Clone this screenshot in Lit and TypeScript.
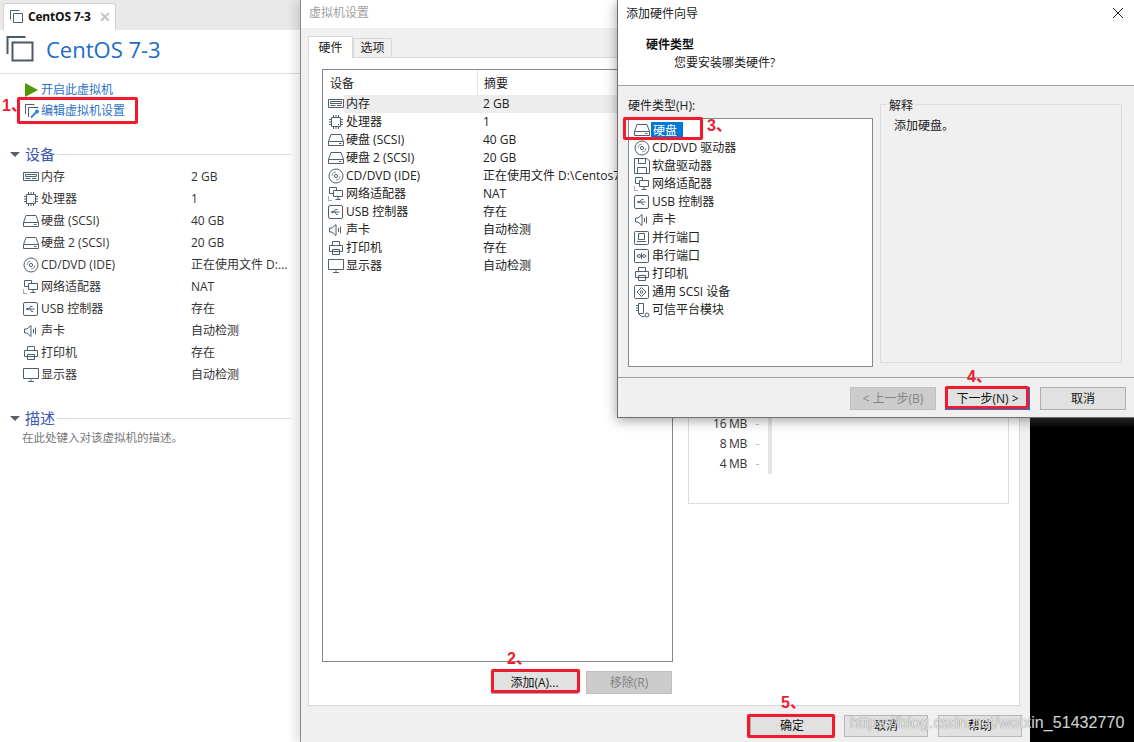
import { LitElement, html, css, svg } from "lit";
import { customElement } from "lit/decorators.js";

const ICONS: Record<string, unknown> = {
  vm: svg`<path d="M1.5 10.5v-9h9M4.5 13.5v-9h9v9z" fill="none"/>`,
  mem: svg`<path d="M.5 3.5h15v8H.5zM2.5 5.5h11v2h-11zM2.500 9.500h5M9 9.500h4.500" fill="none"/>`,
  cpu: svg`<path d="M3.5 3.5h9v9h-9zM5.5 1v2M8 1v2M10.5 1v2M5.5 13v2M8 13v2M10.5 13v2M1 5.5h2M1 8h2M1 10.5h2M13 5.5h2M13 8h2M13 10.5h2M10 10.5h1" fill="none"/>`,
  hdd: svg`<path d="M.5 9.5 3 2.5h10l2.5 7v4H.5zM.5 9.5h15M11 11.5h2.500" fill="none"/>`,
  cd: svg`<circle cx="8" cy="8" r="7" fill="none"/><circle cx="8" cy="8" r="1.6" fill="none"/><path d="M4 8a4 4 0 0 1 4-4M12 8a4 4 0 0 1-4 4" fill="none" opacity=".6"/>`,
  net: svg`<path d="M1.5 1.5h7v3M1.5 1.5v6h4M5.5 4.5h9v6h-9zM10 10.500v3M7.500 13.500h5" fill="none"/><path d="M.5 10.500v4h4" fill="none" stroke-dasharray="1 1"/>`,
  usb: svg`<rect x=".5" y="1.5" width="14" height="13" rx="1.5" fill="none"/><path d="M3.500 8h8M5.500 8l2-2.500h2M7 8l1.500 2.500H10M3.500 8 5 7v2z" fill="none"/>`,
  snd: svg`<path d="M1.5 6v4H4l4 3.500v-11L4 6zM10.500 6v4M12.500 4.500v7" fill="none"/>`,
  prn: svg`<path d="M4.5 5.5v-4h7v4M1.500 5.5h13v6h-13zM4.5 9.5h7v5h-7z" fill="none"/>`,
  mon: svg`<path d="M.5 1.5h15v10H.5zM5 14.500h6" fill="none"/><path d="M7 12h2v2H7z" fill="#b8bec4" stroke="none"/>`,
  flop: svg`<path d="M.5.5H13L15.500 3v12.500H.5zM4.500.5v5h7v-5M3.500 15.500v-6h9v6" fill="none"/>`,
  par: svg`<rect x=".5" y="1.5" width="14" height="13" rx="1" fill="none"/><path d="M4.500 3.500h6v6h-6zM3 11.500h9" fill="none"/>`,
  ser: svg`<rect x=".5" y="1.5" width="14" height="13" rx="1" fill="none"/><circle cx="5" cy="8" r="1.500" fill="none"/><circle cx="10" cy="8" r="1.500" fill="none"/><path d="M2.500 8h1M6.500 8h2M11.500 8h1M7.500 5v6" fill="none"/>`,
  scsi: svg`<rect x=".5" y="1.5" width="14" height="13" rx="1" fill="none"/><path d="M7.500 3.500 12 8l-4.500 4.500L3 8z" fill="none"/><circle cx="7.500" cy="8" r="1.300" fill="none"/>`,
  tpm: svg`<path d="M4.500 1.500h5v10h-5zM2 3.500h2M2 6h2M2 8.500h2M4.500 11.500l3 3h3" fill="none"/><circle cx="13" cy="13" r="2" fill="none"/>`,
};

const icon = (n: string) =>
  html`<svg class="ic" viewBox="0 0 16 16" width="16" height="16">${ICONS[n]}</svg>`;

const LEFT: [string, string, string][] = [
  ["mem", "内存", "2 GB"],
  ["cpu", "处理器", "1"],
  ["hdd", "硬盘 (SCSI)", "40 GB"],
  ["hdd", "硬盘 2 (SCSI)", "20 GB"],
  ["cd", "CD/DVD (IDE)", "正在使用文件 D:..."],
  ["net", "网络适配器", "NAT"],
  ["usb", "USB 控制器", "存在"],
  ["snd", "声卡", "自动检测"],
  ["prn", "打印机", "存在"],
  ["mon", "显示器", "自动检测"],
];

const SETTINGS: [string, string, string][] = LEFT.map((r) =>
  r[0] === "cd" ? [r[0], r[1], "正在使用文件 D:\\Centos7\\CentOS-7-x86_64-DVD.iso"] : r
) as [string, string, string][];

const HW: [string, string][] = [
  ["hdd", "硬盘"],
  ["cd", "CD/DVD 驱动器"],
  ["flop", "软盘驱动器"],
  ["net", "网络适配器"],
  ["usb", "USB 控制器"],
  ["snd", "声卡"],
  ["par", "并行端口"],
  ["ser", "串行端口"],
  ["prn", "打印机"],
  ["scsi", "通用 SCSI 设备"],
  ["tpm", "可信平台模块"],
];

@customElement("app-root")
export class AppRoot extends LitElement {
  static styles = css`
    :host {
      display: block;
      width: 1134px;
      height: 742px;
      font: 12px/16px "Open Sans", "Noto Sans CJK SC", sans-serif;
      color: #222;
    }
    * { box-sizing: border-box; }
    .desk { position: relative; width: 1134px; height: 742px; overflow: hidden; background: linear-gradient(#2c2c2c, #000) 0 418px / 100% 10px no-repeat #000; }
    .ic { flex: none; display: block; stroke: #4f5f6c; stroke-width: 1; }

    /* VM panel */
    .vm { position: absolute; left: 0; top: 0; width: 300px; height: 742px; background: #fff; display: flex; flex-direction: column; }
    .tabs { height: 30px; flex: none; background: #e9e9e9; padding: 3px 0 0 3px; }
    .tab { width: 113px; height: 27px; background: #fff; border: 1px solid #d2d2d2; border-bottom: 0; border-radius: 3px 3px 0 0; display: flex; align-items: center; padding-left: 5px; font-weight: 700; color: #111; letter-spacing: -.2px; }
    .tab .ic { margin-right: 3px; }
    .tab .x { margin-left: auto; margin-right: 4px; color: #c4c4c4; font-size: 14px; font-weight: 700; }
    .head { height: 44px; flex: none; border-bottom: 1px solid #dcdcdc; display: flex; align-items: center; padding: 0 0 5px 6px; gap: 10px; }
    .head .ic { stroke: #4a5a68; stroke-width: 1.1; }
    .head span { font-size: 22px; line-height: 30px; color: #1a6cc4; }
    .actions { padding: 5px 0 0 25px; height: 71px; flex: none; }
    .act { height: 21px; display: flex; align-items: center; color: #2a72c8; white-space: nowrap; }
    .play { width: 0; height: 0; flex: none; border-left: 13px solid #4e9a06; border-top: 7px solid transparent; border-bottom: 7px solid transparent; margin-right: 3px; }
    .sec { display: flex; align-items: center; height: 18px; padding-left: 10px; color: #3d58b0; font-size: 15px; }
    .sec .tri { width: 0; height: 0; border-left: 5px solid transparent; border-right: 5px solid transparent; border-top: 5px solid #55606a; margin-right: 5px; }
    .sec .line { flex: 1; height: 1px; background: #dcdcdc; margin: 0 9px 0 2px; }
    .rows { padding: 3px 0 0 23px; height: 246px; flex: none; }
    .row { display: grid; grid-template-columns: 18px 150px 1fr; height: 22px; align-items: center; color: #333; white-space: nowrap; }
    .desc { padding: 3px 0 0 22px; color: #777; font-size: 11.5px; }

    /* Settings dialog */
    .set { position: absolute; left: 300px; top: 0; width: 730px; height: 742px; background: #f0f0f0; border-left: 1px solid #8a8a8a; box-shadow: -6px 0 8px rgba(0, 0, 0, .1); display: flex; flex-direction: column; }
    .set-title { height: 28px; flex: none; background: #fff; padding: 5px 0 0 8px; color: #a0a0a0; }
    .set-tabs { height: 29px; flex: none; display: flex; align-items: flex-end; padding-left: 7px; }
    .st { width: 45px; height: 22px; background: #fff; border: 1px solid #d9d9d9; border-bottom: 0; display: flex; align-items: center; justify-content: center; position: relative; top: 1px; z-index: 1; }
    .st.off { width: 39px; height: 19px; background: #f0f0f0; top: 0; }
    .panel { margin-left: 7px; width: 712px; height: 649px; flex: none; background: #fff; border: 1px solid #d9d9d9; padding: 11px 13px 0; display: flex; gap: 15px; }
    .col { width: 351px; flex: none; display: flex; flex-direction: column; }
    .list { height: 593px; flex: none; border: 1px solid #828790; background: #fff; }
    .lh { display: grid; grid-template-columns: 155px 1fr; height: 25px; align-items: center; }
    .lh span { padding: 2px 0 0 6px; height: 100%; display: flex; align-items: center; }
    .lh span:first-child { padding-left: 7px; border-right: 1px solid #e5e5e5; }
    .lr { display: grid; grid-template-columns: 21px 139px 1fr; height: 18px; align-items: center; white-space: nowrap; overflow: hidden; }
    .lr .ic { margin-left: 5px; }
    .lr.sel .t, .lr.sel .v { background: #ededed; height: 18px; line-height: 18px; }
    .lr .t { padding-left: 2px; }
    .side { display: flex; justify-content: flex-end; gap: 8px; padding: 9px 1px 0 0; }
    .btn { height: 23px; background: #e1e1e1; border: 1px solid #adadad; display: flex; align-items: center; justify-content: center; width: 86px; white-space: nowrap; color: #111; }
    .btn.off { background: #ccc; border-color: #bfbfbf; color: #838383; }
    .btn.def { border: 2px solid #0078d7; }
    .add { width: 87px; }
    .mem { flex: none; width: 321px; height: 435px; border: 1px solid #dcdcdc; padding-bottom: 29px; display: flex; flex-direction: column; justify-content: flex-end; }
    .mr { height: 20px; display: flex; align-items: center; }
    .mr b { font-weight: 400; width: 58px; text-align: right; color: #333; letter-spacing: -.3px; }
    .mr i { width: 3px; height: 1px; background: #bbb; margin: 0 9px; }
    .mr u { width: 4px; height: 20px; background: #e3e6e3; }
    .foot { flex: 1; display: flex; justify-content: flex-end; align-items: flex-start; gap: 10px; padding: 9px 8px 0 0; }
    .foot .btn { width: 84px; height: 22px; }
    .foot .btn.mn { border-color: #b8b8b8; }

    /* Wizard */
    .wiz { position: absolute; left: 617px; top: 0; width: 517px; height: 418px; background: #f0f0f0; border-left: 1px solid #707070; border-bottom: 1px solid #707070; box-shadow: 0 2px 12px rgba(0, 0, 0, .4); display: flex; flex-direction: column; }
    .wh { height: 86px; flex: none; background: #fff; border-bottom: 1px solid #a0a0a0; position: relative; padding: 6px 0 0 8px; }
    .wh .ttl { display: block; }
    .wh .h1 { display: block; margin: 15px 0 0 20px; font-weight: 700; color: #111; }
    .wh .h2 { display: block; margin: 2px 0 0 48px; color: #222; }
    .close { position: absolute; left: 494px; top: 7px; }
    .wb { height: 292px; flex: none; display: flex; padding: 12px 0 0 10px; border-bottom: 1px solid #a0a0a0; }
    .wl { width: 245px; flex: none; }
    .wl label { display: block; height: 20px; line-height: 16px; }
    .hw { height: 249px; border: 1px solid #828790; background: #fff; padding-top: 2px; }
    .hr { height: 18px; display: flex; align-items: center; padding-left: 5px; white-space: nowrap; gap: 1px; }
    .hr span { padding: 0 1px; }
    .hr.sel span { background: #0078d7; color: #fff; padding: 0 6px 0 2px; line-height: 17px; }
    .grp { position: relative; width: 242px; height: 259px; margin: 6px 0 0 7px; border: 1px solid #dcdcdc; padding: 13px 0 0 13px; }
    .grp .lg { position: absolute; left: 6px; top: -7px; background: #f0f0f0; padding: 0 2px; }
    .wf { flex: 1; display: flex; justify-content: flex-end; gap: 9px; padding: 9px 8px 0 0; }
    .wf .btn { height: 23px; }
    .wf .btn.def { width: 85px; margin-right: 1px; }

    /* Annotations */
    .box { position: absolute; border: 3px solid #ee1c2e; border-radius: 2px; box-shadow: 0 0 1px #f7838c; pointer-events: none; }
    .b1 { left: 17px; top: 97px; width: 121px; height: 27px; }
    .b2 { left: 491px; top: 669px; width: 89px; height: 24px; }
    .b3 { left: 623px; top: 117px; width: 80px; height: 23px; }
    .b4 { left: 945px; top: 386px; width: 84px; height: 23px; }
    .b5 { left: 747px; top: 714px; width: 88px; height: 24px; }
    .num { position: absolute; color: #ee1c2e; font: 700 16px/18px "Liberation Sans", "Noto Sans CJK SC", sans-serif; white-space: nowrap; }
    .n1 { left: 2px; top: 97px; }
    .n2 { left: 507px; top: 650px; }
    .n3 { left: 707px; top: 117px; }
    .n4 { left: 967px; top: 368px; }
    .n5 { left: 781px; top: 694px; }
    .mark { position: absolute; left: 850px; top: 713px; font: 16px/20px "Liberation Sans", sans-serif; letter-spacing: .06px; color: rgba(255, 255, 255, .78); text-shadow: 0 0 1px rgba(70, 70, 70, .8); white-space: nowrap; }
  `;

  render() {
    return html`<div class="desk">
      <section class="vm">
        <div class="tabs"><div class="tab">${icon("vm")}CentOS 7-3<span class="x">✕</span></div></div>
        <div class="head">
          <svg class="ic" viewBox="0 0 30 30" width="30" height="30"><path d="M1.5 20V3h18M6.5 26.5v-18h20v18z" fill="none" stroke-width="2"/></svg>
          <span>CentOS 7-3</span>
        </div>
        <div class="actions">
          <div class="act"><i class="play"></i>开启此虚拟机</div>
          <div class="act">
            <svg class="ic" viewBox="0 0 16 16" width="16" height="16">
              <path d="M.5 11V1.5h9M3.5 14V4.500h10" fill="none"/>
              <path d="M6 14.500l5-5" fill="none" stroke="#2a86d0" stroke-width="2"/>
              <circle cx="12" cy="8.500" r="2" fill="#2a86d0" stroke="none"/>
            </svg>编辑虚拟机设置
          </div>
        </div>
        <div class="sec"><i class="tri"></i>设备<i class="line"></i></div>
        <div class="rows">
          ${LEFT.map((r) => html`<div class="row">${icon(r[0])}<span>${r[1]}</span><span>${r[2]}</span></div>`)}
        </div>
        <div class="sec"><i class="tri"></i>描述<i class="line"></i></div>
        <div class="desc">在此处键入对该虚拟机的描述。</div>
      </section>

      <section class="set">
        <div class="set-title">虚拟机设置</div>
        <div class="set-tabs"><div class="st">硬件</div><div class="st off">选项</div></div>
        <div class="panel">
          <div class="col">
            <div class="list">
              <div class="lh"><span>设备</span><span>摘要</span></div>
              ${SETTINGS.map(
                (r, i) => html`<div class="lr ${i === 0 ? "sel" : ""}">${icon(r[0])}<span class="t">${r[1]}</span><span class="v">${r[2]}</span></div>`
              )}
            </div>
            <div class="side">
              <div class="btn add">添加(A)...</div>
              <div class="btn off">移除(R)</div>
            </div>
          </div>
          <div class="mem">
            ${["16 MB", "8 MB", "4 MB"].map((m) => html`<div class="mr"><b>${m}</b><i></i><u></u></div>`)}
          </div>
        </div>
        <div class="foot">
          <div class="btn">确定</div>
          <div class="btn mn">取消</div>
          <div class="btn mn">帮助</div>
        </div>
      </section>

      <section class="wiz">
        <div class="wh">
          <span class="ttl">添加硬件向导</span>
          <span class="h1">硬件类型</span>
          <span class="h2">您要安装哪类硬件?</span>
          <svg class="close" viewBox="0 0 12 12" width="12" height="12"><path d="M1 1l10 10M11 1L1 11" stroke="#222" fill="none"/></svg>
        </div>
        <div class="wb">
          <div class="wl">
            <label>硬件类型(H):</label>
            <div class="hw">
              ${HW.map((h, i) => html`<div class="hr ${i === 0 ? "sel" : ""}">${icon(h[0])}<span>${h[1]}</span></div>`)}
            </div>
          </div>
          <div class="grp"><span class="lg">解释</span>添加硬盘。</div>
        </div>
        <div class="wf">
          <div class="btn off">&lt; 上一步(B)</div>
          <div class="btn def">下一步(N) &gt;</div>
          <div class="btn">取消</div>
        </div>
      </section>

      <div class="box b1"></div><div class="box b2"></div><div class="box b3"></div><div class="box b4"></div><div class="box b5"></div>
      <span class="num n1">1、</span><span class="num n2">2、</span><span class="num n3">3、</span><span class="num n4">4、</span><span class="num n5">5、</span>
      <span class="mark">https://blog.csdn.net/weixin_51432770</span>
    </div>`;
  }
}
